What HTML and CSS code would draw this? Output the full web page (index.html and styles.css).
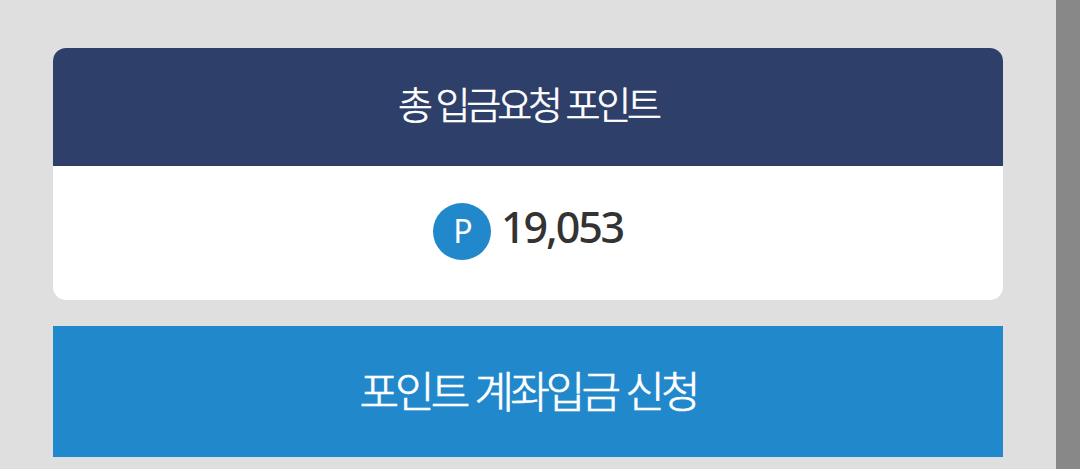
FILE: index.html
```html
<!DOCTYPE html>
<html lang="ko">
<head>
<meta charset="utf-8"/>
<title>포인트 입금</title>
<link rel="stylesheet" href="styles.css">
</head>
<body>
<div id="wrap">
	<div class="point-box">
		<h2>총 입금요청 포인트</h2>
		<div class="point">
			<span class="icon">P</span>
			<strong>19,053</strong>
		</div>
	</div>
	<button type="button" class="btn-apply"><span>포인트 계좌입금 신청</span></button>
</div>
</body>
</html>
```
FILE: styles.css
```css
*{box-sizing:border-box;}
body{margin:0;height:469px;overflow:hidden;background-color:#888;font-family:"Noto Sans CJK KR","Noto Sans",sans-serif;}
#wrap{width:1056px;height:469px;padding:48px 53px 0;background-color:#dfdfdf;}
.point-box{height:252px;border-radius:13px;overflow:hidden;background-color:#fff;}
.point-box h2{margin:0;height:118px;line-height:110px;background-color:#2e3f6a;color:#fff;font-size:38px;font-weight:300;letter-spacing:-4.1px;text-align:center;-webkit-text-stroke:.7px #fff;}
.point{display:flex;justify-content:center;height:134px;padding-top:37px;}
.point .icon{width:58px;height:57px;padding-left:2px;border-radius:50%;background-color:#2288cc;color:#fff;font:400 32px/55px "Noto Sans",sans-serif;text-align:center;}
.point strong{width:122px;margin-left:10px;color:#333;font:500 43px/47px "Noto Sans",sans-serif;letter-spacing:-2.1px;white-space:nowrap;}
.btn-apply{display:block;width:100%;height:131px;margin-top:26px;padding:0;border:0;background-color:#2288cc;color:#fff;font-family:inherit;font-size:43px;font-weight:300;letter-spacing:-3.9px;line-height:126px;-webkit-text-stroke:.7px #fff;}
.btn-apply span{display:block;height:131px;}
```
